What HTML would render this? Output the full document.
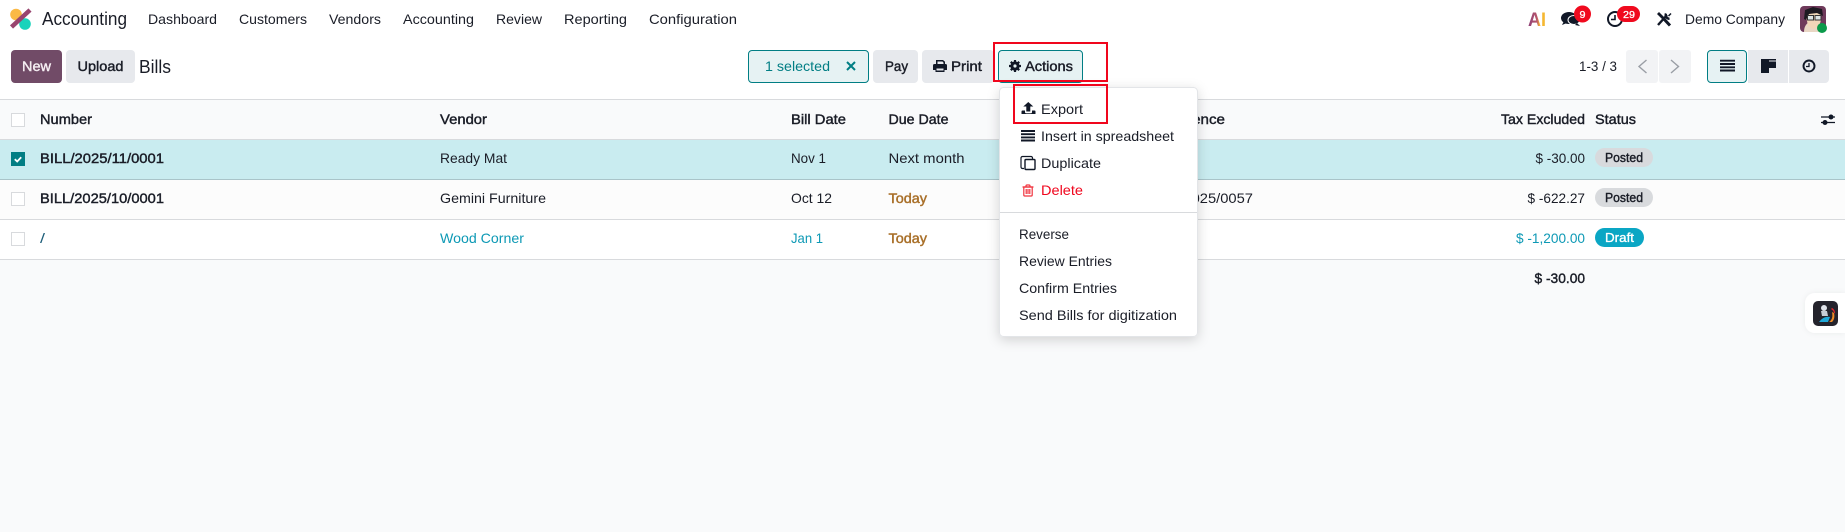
<!DOCTYPE html>
<html lang="en"><head><meta charset="utf-8"><title>Bills</title>
<style>
html,body{margin:0;padding:0;background:#f9fafb;width:1845px;height:532px;overflow:hidden}
svg{display:block}
text{font-family:"Liberation Sans",sans-serif;font-size:14px;fill:#1a1d27}
.b{stroke:#1a1d27;stroke-width:.42}
.t{fill:#0d99b5}
.w{fill:#fff;stroke:#fff}
.y{fill:#a9702a;stroke:#a9702a}
</style></head><body>
<svg width="1845" height="532" viewBox="0 0 1845 532" xmlns="http://www.w3.org/2000/svg">
<defs>
<filter id="sh" x="-15%" y="-15%" width="130%" height="130%"><feDropShadow dx="0" dy="3" stdDeviation="6" flood-color="#000" flood-opacity=".16"/></filter>
<filter id="sh2" x="-30%" y="-30%" width="160%" height="160%"><feDropShadow dx="0" dy="0" stdDeviation="3" flood-color="#000" flood-opacity=".06"/></filter>
<linearGradient id="ai" x1="0" x2="1" y1="0" y2="0"><stop offset="0" stop-color="#8c3f78"/><stop offset=".5" stop-color="#b8566a"/><stop offset=".65" stop-color="#f5b731"/><stop offset="1" stop-color="#f5b731"/></linearGradient>
</defs>
<rect width="1845" height="532" fill="#f9fafb"/>
<!-- navbar + control panel -->
<rect width="1845" height="99" fill="#fff"/>
<rect y="99" width="1845" height="1" fill="#d8dadd"/>
<circle cx="16" cy="14.500" r="5.800" fill="#fbb945"/>
<circle cx="25" cy="24" r="5.800" fill="#1ad3bb"/>
<path d="M30 10 11.500 27" stroke="#98456f" stroke-width="4.500"/>
<text x="42" y="25" style="font-size:18px" textLength="85" lengthAdjust="spacingAndGlyphs">Accounting</text>
<text x="148" y="24" textLength="69" lengthAdjust="spacingAndGlyphs">Dashboard</text>
<text x="239" y="24" textLength="68" lengthAdjust="spacingAndGlyphs">Customers</text>
<text x="329" y="24" textLength="52" lengthAdjust="spacingAndGlyphs">Vendors</text>
<text x="403" y="24" textLength="71" lengthAdjust="spacingAndGlyphs">Accounting</text>
<text x="496" y="24" textLength="46" lengthAdjust="spacingAndGlyphs">Review</text>
<text x="564" y="24" textLength="63" lengthAdjust="spacingAndGlyphs">Reporting</text>
<text x="649" y="24" textLength="88" lengthAdjust="spacingAndGlyphs">Configuration</text>

<!-- systray -->
<text x="1528" y="26" style="font-size:19px;font-weight:700;fill:url(#ai)" textLength="18" lengthAdjust="spacingAndGlyphs">AI</text>
<g fill="#111827">
<ellipse cx="1569" cy="18" rx="8" ry="6"/><path d="M1564 21l-2 4 5-2z"/>
<ellipse cx="1574" cy="20" rx="6" ry="4.500" stroke="#fff" stroke-width="1"/><path d="M1577 23l3 3-5-1z"/>
</g>
<circle cx="1582.500" cy="14" r="8.500" fill="#f00a1e"/>
<text x="1579.500" y="18" class="w" style="font-size:10.500px;stroke-width:.3" textLength="6" lengthAdjust="spacingAndGlyphs">9</text>
<circle cx="1615" cy="19" r="7" fill="none" stroke="#111827" stroke-width="2"/>
<path d="M1615 15v4.500h-4" fill="none" stroke="#111827" stroke-width="1.600"/>
<rect x="1617" y="6" width="23" height="16" rx="8" fill="#f00a1e"/>
<text x="1623" y="18" class="w" style="font-size:10.500px;stroke-width:.3" textLength="12" lengthAdjust="spacingAndGlyphs">29</text>
<g fill="none" stroke="#111827">
<path d="M1658 25l9-10" stroke-width="2.400"/>
<path d="M1666 13.500a3.800 3.800 0 0 0 3.500 5.300" stroke-width="2.400"/>
<path d="M1671 13.500l-2.500 2.500" stroke-width="1.500"/>
<path d="M1658 13l5 5" stroke-width="2.800"/>
<path d="M1663 18l7 7.500" stroke-width="3"/>
</g>
<text x="1685" y="24" textLength="100" lengthAdjust="spacingAndGlyphs">Demo Company</text>
<!-- avatar -->
<rect x="1800" y="6" width="26" height="26" rx="4" fill="#6f3a5b"/>
<path d="M1804 32c0-5 2-8 5-10l10 4 3 6z" fill="#e9d7c4"/>
<path d="M1806 16l2-5 10-1 3 4v6l-2 7-6 2-5-3z" fill="#f0d6b8"/>
<path d="M1804 19l1-9 8-3 9 2 1 7-6-3-8 1-3 6z" fill="#1e1a22"/>
<rect x="1807.500" y="15.500" width="6" height="4.500" fill="#dfe5e6" stroke="#333" stroke-width="1"/>
<rect x="1815" y="15.500" width="6" height="4.500" fill="#dfe5e6" stroke="#333" stroke-width="1"/>
<circle cx="1822" cy="28" r="5" fill="#0b9a4a"/>

<!-- buttons -->
<rect x="11" y="50" width="51" height="33" rx="4" fill="#714b67"/>
<text x="22" y="71" class="w" style="fill:#f5eef2;stroke:#f5eef2;stroke-width:.4" textLength="29" lengthAdjust="spacingAndGlyphs">New</text>
<rect x="66" y="50" width="69" height="33" rx="4" fill="#e7e9ed"/>
<text x="77.500" y="71" class="b" textLength="46" lengthAdjust="spacingAndGlyphs">Upload</text>
<text x="139" y="73" style="font-size:18px" textLength="32" lengthAdjust="spacingAndGlyphs">Bills</text>

<rect x="748.500" y="50.500" width="120" height="32" rx="3.500" fill="#e6f2f3" stroke="#017e84"/>
<text x="765" y="71" style="fill:#017e84" textLength="65" lengthAdjust="spacingAndGlyphs">1 selected</text>
<path d="M847 62l8 8M855 62l-8 8" stroke="#017e84" stroke-width="2"/>
<rect x="873" y="50" width="45" height="33" rx="4" fill="#e7e9ed"/>
<text x="885" y="71" class="b" textLength="23" lengthAdjust="spacingAndGlyphs">Pay</text>
<rect x="922" y="50" width="72" height="33" rx="4" fill="#e7e9ed"/>
<g fill="#111827">
<path d="M936 64v-4h7l2 1.800V64h-1.500v-1.400l-1-1.100H937.500V64z"/>
<path d="M934.500 64h11a1.500 1.500 0 0 1 1.500 1.500V70h-2.500v2h-9v-2H933v-4.500a1.500 1.500 0 0 1 1.500-1.500zm2 4.500v2h7v-2z" fill-rule="evenodd"/>
</g>
<text x="951" y="71" class="b" textLength="31" lengthAdjust="spacingAndGlyphs">Print</text>
<rect x="998.500" y="50.500" width="84" height="32" rx="3.500" fill="#e6f2f3" stroke="#017e84"/>
<circle cx="1015" cy="66" r="4.600" fill="#111827"/>
<path d="M1015 60v12M1009 66h12M1010.800 61.800l8.400 8.400M1019.200 61.800l-8.400 8.400" stroke="#111827" stroke-width="2.200"/>
<circle cx="1015" cy="66" r="1.600" fill="#e6f2f3"/>
<text x="1025" y="71" class="b" textLength="48" lengthAdjust="spacingAndGlyphs">Actions</text>

<!-- pager -->
<text x="1579" y="71" textLength="38" lengthAdjust="spacingAndGlyphs">1-3 / 3</text>
<rect x="1626" y="50" width="32" height="33" rx="3" fill="#f2f3f5"/>
<rect x="1659" y="50" width="32" height="33" rx="3" fill="#f2f3f5"/>
<path d="M1646.500 60l-7.500 6.500 7.500 6.500M1671 60l7.500 6.500-7.500 6.500" fill="none" stroke="#9a9ea5" stroke-width="1.400"/>
<!-- views -->
<rect x="1748" y="50" width="41" height="33" fill="#e7e9ed"/>
<path d="M1789 50h36a4 4 0 0 1 4 4v25a4 4 0 0 1-4 4h-36z" fill="#e7e9ed"/>
<rect x="1788" y="50" width="1" height="33" fill="#fff"/>
<rect x="1707.500" y="50.500" width="39" height="32" rx="3.500" fill="#e6f2f3" stroke="#017e84"/>
<path d="M1720 60.700h15M1720 64h15M1720 67.300h15M1720 70.500h15" stroke="#111827" stroke-width="1.900"/>
<path d="M1761 59h15v1.500h-7v12.500h-8zM1769 61.500h7v6.500h-7z" fill="#111827"/>
<circle cx="1809" cy="66" r="5.500" fill="none" stroke="#111827" stroke-width="1.900"/>
<path d="M1809 63v3.500h-3" fill="none" stroke="#111827" stroke-width="1.300"/>

<!-- table -->
<rect y="100" width="1845" height="39" fill="#f9fafb"/>
<rect y="139" width="1845" height="1" fill="#d8dadd"/>
<rect y="140" width="1845" height="39" fill="#c9ecf0"/>
<rect y="179" width="1845" height="1" fill="#a9c4c9"/>
<rect y="180" width="1845" height="39" fill="#fcfcfc"/>
<rect y="219" width="1845" height="1" fill="#d8dadd"/>
<rect y="220" width="1845" height="39" fill="#fff"/>
<rect y="259" width="1845" height="1" fill="#d8dadd"/>

<g fill="#fff" stroke="#d8dadd">
<rect x="11.500" y="113.500" width="13" height="13"/>
<rect x="11.500" y="192.500" width="13" height="13"/>
<rect x="11.500" y="232.500" width="13" height="13"/>
</g>
<rect x="11" y="152" width="14" height="14" fill="#017e84"/>
<path d="M14.800 159.200l2.400 2.300 4-4.300" fill="none" stroke="#fff" stroke-width="1.800"/>

<text x="40" y="124" class="b" textLength="52" lengthAdjust="spacingAndGlyphs">Number</text>
<text x="440" y="124" class="b" textLength="47" lengthAdjust="spacingAndGlyphs">Vendor</text>
<text x="791" y="124" class="b" textLength="55" lengthAdjust="spacingAndGlyphs">Bill Date</text>
<text x="888.500" y="124" class="b" textLength="60" lengthAdjust="spacingAndGlyphs">Due Date</text>
<text x="1155" y="124" class="b" textLength="70" lengthAdjust="spacingAndGlyphs">Reference</text>
<text x="1501" y="124" class="b" textLength="84" lengthAdjust="spacingAndGlyphs">Tax Excluded</text>
<text x="1595" y="124" class="b" textLength="41" lengthAdjust="spacingAndGlyphs">Status</text>
<path d="M1821 117h14M1821 122.500h14" stroke="#111827" stroke-width="1.300"/>
<circle cx="1831" cy="117" r="2.500" fill="#111827"/><circle cx="1825" cy="122.500" r="2.500" fill="#111827"/>

<text x="40" y="163" class="b" textLength="124" lengthAdjust="spacingAndGlyphs">BILL/2025/11/0001</text>
<text x="440" y="163" textLength="67" lengthAdjust="spacingAndGlyphs">Ready Mat</text>
<text x="791" y="163" textLength="35" lengthAdjust="spacingAndGlyphs">Nov 1</text>
<text x="888.500" y="163" textLength="76" lengthAdjust="spacingAndGlyphs">Next month</text>
<text x="1535.500" y="163" textLength="49.500" lengthAdjust="spacingAndGlyphs">$ -30.00</text>
<rect x="1595" y="148" width="58" height="19" rx="9.500" fill="#d8dadd"/>
<text x="1605" y="162" class="b" style="font-size:13px" textLength="38" lengthAdjust="spacingAndGlyphs">Posted</text>

<text x="40" y="203" class="b" textLength="124" lengthAdjust="spacingAndGlyphs">BILL/2025/10/0001</text>
<text x="440" y="203" textLength="106" lengthAdjust="spacingAndGlyphs">Gemini Furniture</text>
<text x="791" y="203" textLength="41" lengthAdjust="spacingAndGlyphs">Oct 12</text>
<text x="888.500" y="203" class="y" textLength="38.500" lengthAdjust="spacingAndGlyphs" style="stroke-width:.42">Today</text>
<text x="1149" y="203" textLength="104" lengthAdjust="spacingAndGlyphs">BILL/2025/0057</text>
<text x="1527.500" y="203" textLength="57.500" lengthAdjust="spacingAndGlyphs">$ -622.27</text>
<rect x="1595" y="188" width="58" height="19" rx="9.500" fill="#d8dadd"/>
<text x="1605" y="202" class="b" style="font-size:13px" textLength="38" lengthAdjust="spacingAndGlyphs">Posted</text>

<text x="40" y="243" style="fill:#1f5f7a" textLength="5" lengthAdjust="spacingAndGlyphs">/</text>
<text x="440" y="243" class="t" textLength="84" lengthAdjust="spacingAndGlyphs">Wood Corner</text>
<text x="791" y="243" class="t" textLength="32" lengthAdjust="spacingAndGlyphs">Jan 1</text>
<text x="888.500" y="243" class="y" textLength="38.500" lengthAdjust="spacingAndGlyphs" style="stroke-width:.42">Today</text>
<text x="1516" y="243" class="t" textLength="69" lengthAdjust="spacingAndGlyphs">$ -1,200.00</text>
<rect x="1595" y="228" width="49" height="19" rx="9.500" fill="#0aa6c4"/>
<text x="1605" y="242" class="w" style="font-size:13px;stroke-width:.35" textLength="29" lengthAdjust="spacingAndGlyphs">Draft</text>

<text x="1534.500" y="283" class="b" textLength="50.500" lengthAdjust="spacingAndGlyphs">$ -30.00</text>

<!-- dropdown -->
<rect x="999.500" y="87.500" width="198" height="249" rx="4" fill="#fff" stroke="#e3e5e8" filter="url(#sh)"/>
<path d="M1028.300 102l5 4.500h-3v5h-4v-5h-3z" fill="#111827"/>
<path d="M1022.500 110.500h2.500v1.800a1 1 0 0 0 1 1h5a1 1 0 0 0 1-1v-1.800h2.500a1 1 0 0 1 1 1v2.500h-14v-2.500a1 1 0 0 1 1-1z" fill="#111827"/>
<path d="M1021 131h14M1021 134.200h14M1021 137.400h14M1021 140.500h14" stroke="#111827" stroke-width="1.900"/>
<text x="1041" y="114" textLength="42" lengthAdjust="spacingAndGlyphs">Export</text>
<text x="1041" y="141" textLength="133" lengthAdjust="spacingAndGlyphs">Insert in spreadsheet</text>
<path d="M1024 168.500h-1.500a1.500 1.500 0 0 1-1.500-1.500v-9a1.500 1.500 0 0 1 1.500-1.500h8.500a1.500 1.500 0 0 1 1.500 1.500v1" fill="none" stroke="#111827" stroke-width="1.200"/>
<rect x="1025" y="159.500" width="10" height="10" rx="1" fill="none" stroke="#111827" stroke-width="1.400"/>
<text x="1041" y="168" textLength="60" lengthAdjust="spacingAndGlyphs">Duplicate</text>
<g fill="none" stroke="#f0343f" stroke-width="1.200">
<path d="M1022.500 187h11M1026 187v-1a1 1 0 0 1 1-1h2a1 1 0 0 1 1 1v1"/>
<path d="M1023.800 187v8a1 1 0 0 0 1 1h6.400a1 1 0 0 0 1-1v-8z"/>
<path d="M1026.200 189v5M1028 189v5M1029.800 189v5"/>
</g>
<text x="1041" y="195" style="fill:#f0061d" textLength="42" lengthAdjust="spacingAndGlyphs">Delete</text>
<rect x="1000" y="212" width="197" height="1" fill="#d8dadd"/>
<text x="1019" y="239" textLength="50" lengthAdjust="spacingAndGlyphs">Reverse</text>
<text x="1019" y="266" textLength="93" lengthAdjust="spacingAndGlyphs">Review Entries</text>
<text x="1019" y="293" textLength="98" lengthAdjust="spacingAndGlyphs">Confirm Entries</text>
<text x="1019" y="320" textLength="158" lengthAdjust="spacingAndGlyphs">Send Bills for digitization</text>

<!-- annotation boxes -->
<rect x="994" y="43" width="113" height="38" fill="none" stroke="#f0061d" stroke-width="2"/>
<rect x="1014" y="85" width="93" height="38" fill="none" stroke="#f0061d" stroke-width="2"/>

<!-- floating widget -->
<path d="M1845 293h-30a10 10 0 0 0-10 10v20a10 10 0 0 0 10 10h30z" fill="#fff" filter="url(#sh2)"/>
<rect x="1813" y="301" width="25" height="25" rx="5" fill="#24232c"/>
<circle cx="1824" cy="308" r="3" fill="#dfe3ea"/>
<path d="M1821 311h6l1 5h-6z" fill="#c8cdd6"/>
<path d="M1819 322c3-4 7-6 11-5l-2 5z" fill="#1fa8d8"/>
<path d="M1829 322c3-2 4-5 3-10l2 1c1 4 0 7-2 9z" fill="#f08a24"/>
<path d="M1832 308c2 1 3 3 3 5l-1 .5c0-2-1-3-3-4.500z" fill="#e0262c"/>
</svg>
</body></html>
